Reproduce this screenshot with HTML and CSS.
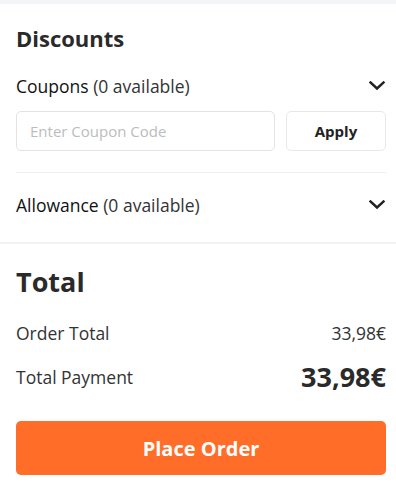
FILE: index.html
```html
<!DOCTYPE html>
<html>
<head>
<meta charset="utf-8">
<link rel="stylesheet" href="styles.css">
</head>
<body>
<div class="band"></div>
<section class="discounts">
  <h2 class="title">Discounts</h2>
  <div class="row toggle">
    <span><span class="strong">Coupons</span> (0 available)</span>
    <svg class="chev" width="16" height="10" viewBox="0 0 16 10"><path d="M1.5 1.5 L8 7.5 L14.5 1.5" fill="none" stroke="#222" stroke-width="2.4" stroke-linecap="square"/></svg>
  </div>
  <div class="coupon">
    <input class="code" type="text" placeholder="Enter Coupon Code">
    <button class="apply">Apply</button>
  </div>
  <div class="divider"></div>
  <div class="row toggle allow">
    <span><span class="strong">Allowance</span> (0 available)</span>
    <svg class="chev" width="16" height="10" viewBox="0 0 16 10"><path d="M1.5 1.5 L8 7.5 L14.5 1.5" fill="none" stroke="#222" stroke-width="2.4" stroke-linecap="square"/></svg>
  </div>
</section>
<div class="sep"></div>
<section class="total">
  <h2 class="big">Total</h2>
  <div class="row line">
    <span>Order Total</span>
    <span>33,98€</span>
  </div>
  <div class="row line pay">
    <span>Total Payment</span>
    <span class="amount">33,98€</span>
  </div>
  <button class="place">Place Order</button>
</section>
</body>
</html>
```
FILE: styles.css
```css
* { box-sizing: border-box; }
html, body { margin: 0; padding: 0; background: #fff; }
body {
  font-family: "Open Sans", "Noto Sans", sans-serif;
  color: #333;
  width: 396px;
}
.band { height: 4px; background: #f4f5f7; }
.discounts, .total { padding: 0 10px 0 16px; }
.title {
  margin: 0;
  padding-top: 20px;
  font-size: 22px;
  line-height: 28px;
  font-weight: 700;
  color: #2a2a2a;
}
.row {
  display: flex;
  justify-content: space-between;
  align-items: center;
}
.toggle {
  font-size: 17.5px;
  line-height: 24px;
  color: #333;
  margin-top: 22px;
}
.toggle .strong { font-weight: 500; color: #111; }
.chev { margin-right: 1px; }
.coupon {
  display: flex;
  gap: 11px;
  margin-top: 13px;
}
.code {
  flex: 1;
  height: 40px;
  border: 1px solid #e3e3e3;
  border-radius: 5px;
  padding: 0 13px;
  font-family: inherit;
  font-size: 15px;
  color: #333;
  outline: none;
}
.code::placeholder { color: #bcbcbc; }
.apply {
  width: 100px;
  height: 40px;
  border: 1px solid #e8e8e8;
  border-radius: 5px;
  background: #fff;
  font-family: inherit;
  font-size: 15px;
  font-weight: 700;
  color: #222;
  padding: 0;
}
.divider { height: 1px; background: #efefef; margin-top: 21px; }
.allow { margin-top: 20px; }
.sep { height: 2px; background: #f2f2f2; margin-top: 25px; }
.big {
  margin: 0;
  padding-top: 18px;
  font-size: 27px;
  line-height: 40px;
  font-weight: 700;
  color: #2a2a2a;
}
.line {
  font-size: 17.5px;
  line-height: 24px;
  color: #333;
  margin-top: 19px;
}
.pay { margin-top: 12px; }
.amount { font-size: 27px; font-weight: 700; color: #2a2a2a; line-height: 40px; }
.place {
  display: block;
  width: 100%;
  height: 54px;
  margin-top: 24px;
  border: none;
  border-radius: 5px;
  background: #ff6d29;
  color: #fff;
  font-family: inherit;
  font-size: 20px;
  font-weight: 700;
}
```
